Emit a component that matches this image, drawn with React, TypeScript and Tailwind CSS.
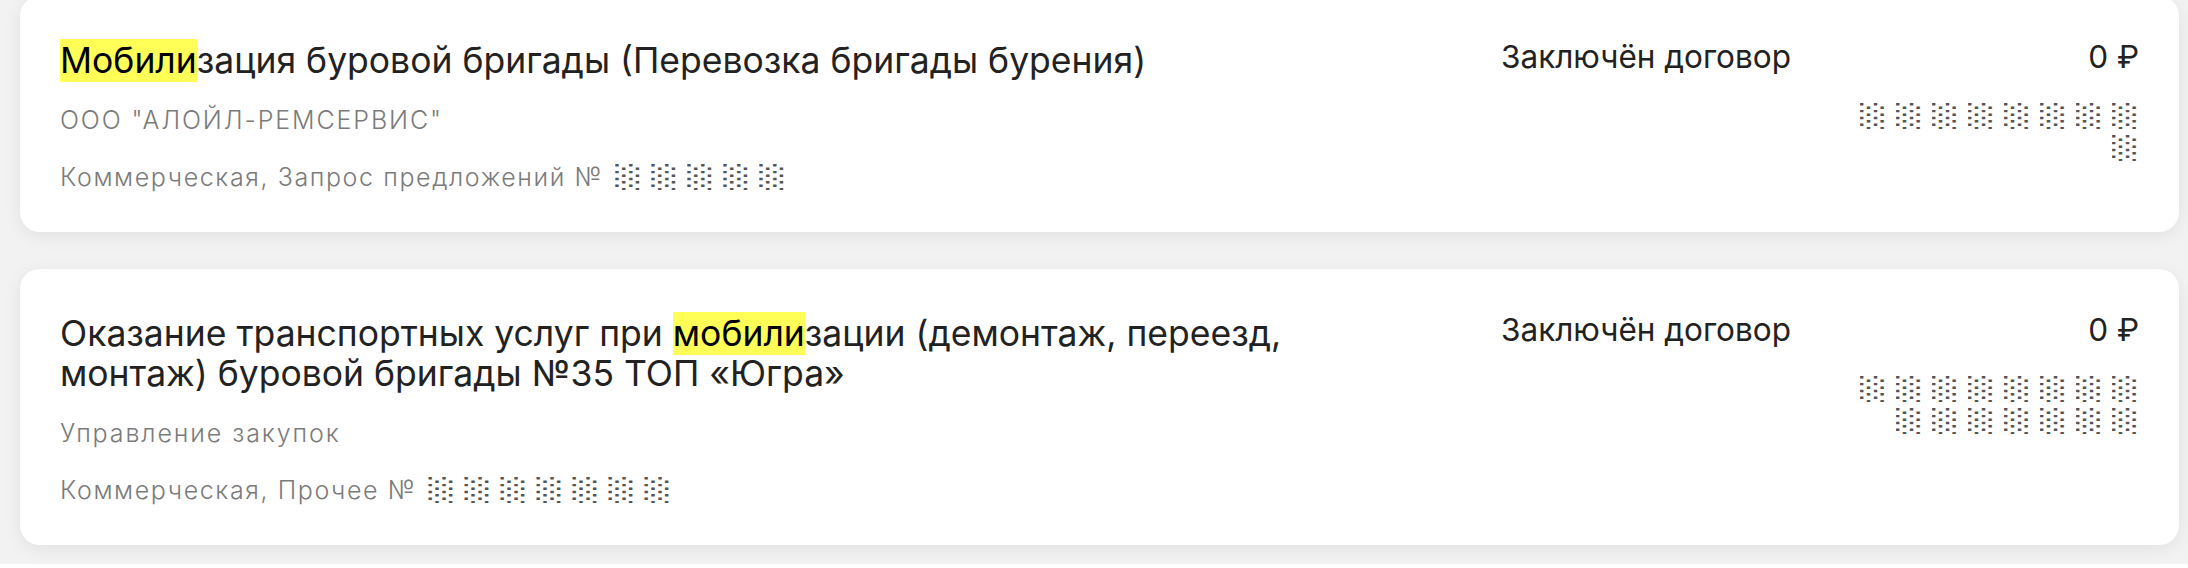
import React from 'react';

type Row = {
  before: string;
  hl: string;
  after: string;
  org: string;
  kind: string;
  numMask: number;
  status: string;
  price: string;
  innMask: number;
};

const rows: Row[] = [
  {
    before: '',
    hl: 'Мобили',
    after: 'зация буровой бригады (Перевозка бригады бурения)',
    org: 'ООО "АЛОЙЛ-РЕМСЕРВИС"',
    kind: 'Коммерческая, Запрос предложений №',
    numMask: 5,
    status: 'Заключён договор',
    price: '0 ₽',
    innMask: 9,
  },
  {
    before: 'Оказание транспортных услуг при ',
    hl: 'мобили',
    after: 'зации (демонтаж, переезд, монтаж) буровой бригады №35 ТОП «Югра»',
    org: 'Управление закупок',
    kind: 'Коммерческая, Прочее №',
    numMask: 7,
    status: 'Заключён договор',
    price: '0 ₽',
    innMask: 15,
  },
];

// masked digits, shown as light-shade blocks
function Mask({ n }: { n: number }) {
  return (
    <>
      {Array.from({ length: n }).map((_, i) => (
        <span
          key={i}
          className="inline-block w-[27px] h-[26px] text-center scale-y-50 font-['DejaVu_Sans_Mono',monospace] text-[45px] leading-[26px] tracking-normal text-[#555]"
        >
          ░
        </span>
      ))}
    </>
  );
}

function Card({ r }: { r: Row }) {
  return (
    <div className="flex rounded-[20px] bg-white pl-10 pr-10 pt-[45px] pb-[35px] shadow-[0_4px_18px_rgba(0,0,0,0.07)]">
      <div className="w-[1285px] shrink-0">
        <div className="text-[35.5px] leading-[40px] text-[#222]">
          {r.before}
          <span className="bg-[#ffff57] text-black">{r.hl}</span>
          {r.after}
        </div>
        <div className="mt-[19px] text-[25px] leading-[40px] tracking-[1.9px] font-light text-[#7b7b7b]">{r.org}</div>
        <div className="mt-[17px] flex items-end text-[25px] leading-[40px] tracking-[1.6px] font-light text-[#7b7b7b]">
          <span className="mr-[12px]">{r.kind}</span>
          <span className="flex gap-x-[9px] pb-[7px]">
            <Mask n={r.numMask} />
          </span>
        </div>
      </div>
      <div className="ml-auto w-[357px] text-[31.5px] leading-[32px] text-[#222]">{r.status}</div>
      <div className="w-[281px] text-right">
        <div className="text-[31.5px] leading-[32px] text-[#222]">{r.price}</div>
        <div className="mt-[30px] flex flex-wrap justify-end gap-x-[9px] gap-y-[6px]">
          <Mask n={r.innMask} />
        </div>
      </div>
    </div>
  );
}

export default function App() {
  return (
    <div className="min-h-[568px] bg-[#f2f2f2] font-['Inter','Noto_Sans',sans-serif]">
      <div className="flex flex-col gap-[37px] pl-5 pr-[9px] -mt-1 pb-[18px]">
        {rows.map((r, i) => (
          <Card key={i} r={r} />
        ))}
      </div>
    </div>
  );
}
